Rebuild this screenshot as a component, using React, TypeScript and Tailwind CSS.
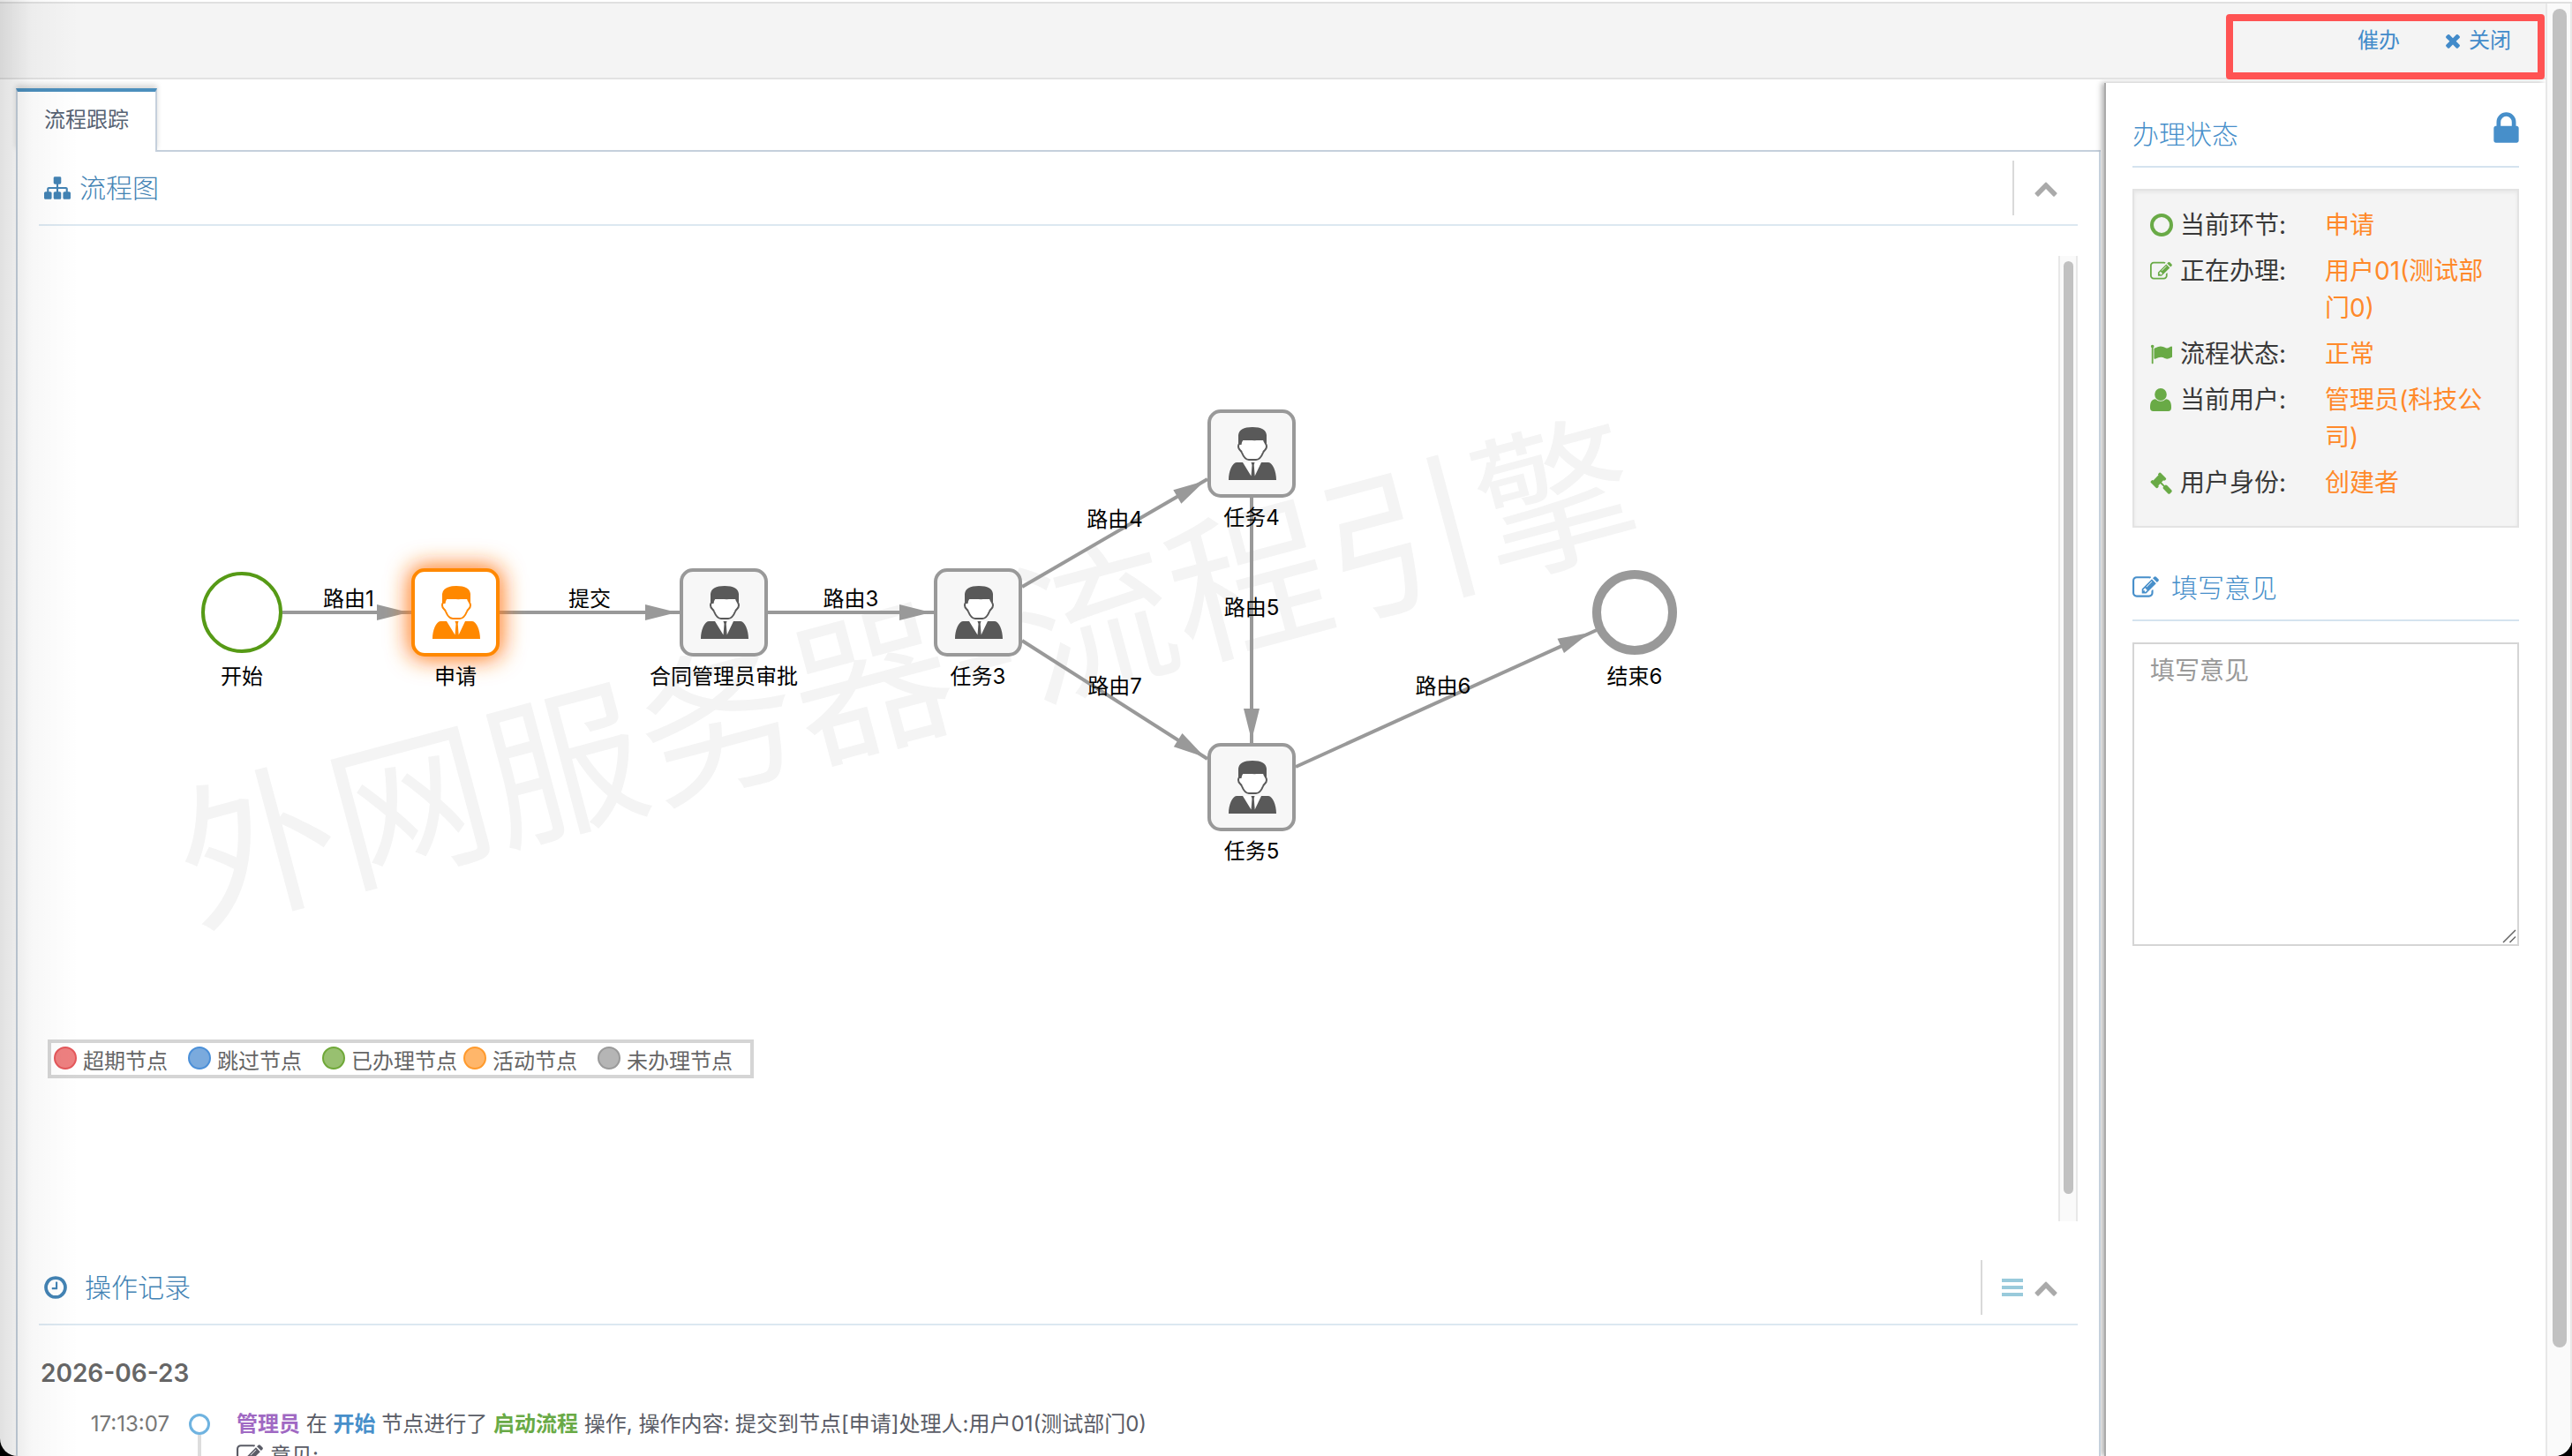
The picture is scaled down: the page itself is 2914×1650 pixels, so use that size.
import React from 'react';

const iconPaths = {
  sitemap:
    'M1792 1248v320q0 40-28 68t-68 28h-320q-40 0-68-28t-28-68v-320q0-40 28-68t68-28h96v-192h-512v192h96q40 0 68 28t28 68v320q0 40-28 68t-68 28h-320q-40 0-68-28t-28-68v-320q0-40 28-68t68-28h96v-192h-512v192h96q40 0 68 28t28 68v320q0 40-28 68t-68 28h-320q-40 0-68-28t-28-68v-320q0-40 28-68t68-28h96v-192q0-52 38-90t90-38h512v-192h-96q-40 0-68-28t-28-68v-320q0-40 28-68t68-28h320q40 0 68 28t28 68v320q0 40-28 68t-68 28h-96v192h512q52 0 90 38t38 90v192h96q40 0 68 28t28 68z',
  edit: 'M888 1184l116-116-152-152-116 116v56h96v96h56zm440-720q-16-16-33 1l-350 350q-17 17-1 33t33-1l350-350q17-17 1-33zm80 594v190q0 119-84.5 203.5t-203.5 84.5h-832q-119 0-203.5-84.5t-84.5-203.5v-832q0-119 84.5-203.5t203.5-84.5h832q63 0 117 25 15 7 18 23 3 17-9 29l-49 49q-14 14-32 8-23-6-45-6h-832q-66 0-113 47t-47 113v832q0 66 47 113t113 47h832q66 0 113-47t47-113v-126q0-13 9-22l64-64q15-15 35-7t20 29zm-96-738l288 288-672 672h-288v-288zm444 132l-92 92-288-288 92-92q28-28 68-28t68 28l152 152q28 28 28 68t-28 68z',
  lock: 'M640 768h512v-192q0-106-75-181t-181-75-181 75-75 181v192zm832 96v576q0 40-28 68t-68 28h-960q-40 0-68-28t-28-68v-576q0-40 28-68t68-28h32v-192q0-184 132-316t316-132 316 132 132 316v192h32q40 0 68 28t28 68z',
  times:
    'M1490 1322q0 40-28 68l-136 136q-28 28-68 28t-68-28l-294-294-294 294q-28 28-68 28t-68-28l-136-136q-28-28-28-68t28-68l294-294-294-294q-28-28-28-68t28-68l136-136q28-28 68-28t68 28l294 294 294-294q28-28 68-28t68 28l136 136q28 28 28 68t-28 68l-294 294 294 294q28 28 28 68z',
  chevronUp:
    'M1683 1331l-166 165q-19 19-45 19t-45-19l-531-531-531 531q-19 19-45 19t-45-19l-166-165q-19-19-19-45.5t19-45.5l742-741q19-19 45-19t45 19l742 741q19 19 19 45.5t-19 45.5z',
  clock:
    'M1024 544v448q0 14-9 23t-23 9h-320q-14 0-23-9t-9-23v-64q0-14 9-23t23-9h224v-352q0-14 9-23t23-9h64q14 0 23 9t9 23zm416 352q0-148-73-273t-198-198-273-73-273 73-198 198-73 273 73 273 198 198 273 73 273-73 198-198 73-273zm224 0q0 209-103 385.5t-279.5 279.5-385.5 103-385.5-103-279.5-279.5-103-385.5 103-385.5 279.5-279.5 385.5-103 385.5 103 279.5 279.5 103 385.5z',
  flag: 'M320 256q0 72-64 110v1266q0 13-9.5 22.5t-22.5 9.5h-64q-13 0-22.5-9.5t-9.5-22.5v-1266q-64-38-64-110 0-53 37.5-90.5t90.5-37.5 90.5 37.5 37.5 90.5zm1472 64v763q0 25-12.5 38.5t-39.5 27.5q-215 116-369 116-61 0-123.5-22t-108.5-48-115.5-48-142.5-22q-192 0-464 146-17 9-33 9-26 0-45-19t-19-45v-742q0-32 31-55 21-14 79-43 236-120 421-120 107 0 200 29t219 88q38 19 88 19 54 0 117.5-21t110-47 88-47 54.5-21q26 0 45 19t19 45z',
  gavel:
    'M1771 1536q0 53-37 90l-107 108q-39 37-91 37-53 0-90-37l-363-364q-38-36-38-90 0-53 43-96l-256-256-126 126q-14 14-34 14t-34-14q2 2 12.5 12t12.5 13 10 11.5 10 13.5 6 13.5 5.5 16.5 1.5 18q0 38-28 68-3 3-16.5 18t-19 20.5-18.5 16.5-22 15.5-22 9-26 4.5q-40 0-68-28l-408-408q-28-28-28-68 0-13 4.5-26t9-22 15.5-22 16.5-18.5 20.5-19 18-16.5q30-28 68-28 10 0 18 1.5t16.5 5.5 13.5 6 13.5 10 11.5 10 13 12.5 12 12.5q-14-14-14-34t14-34l348-348q14-14 34-14t34 14q-2-2-12.5-12t-12.5-13-10-11.5-10-13.5-6-13.5-5.5-16.5-1.5-18q0-38 28-68 3-3 16.5-18t19-20.5 18.5-16.5 22-15.5 22-9 26-4.5q40 0 68 28l408 408q28 28 28 68 0 13-4.5 26t-9 22-15.5 22-16.5 18.5-20.5 19-18 16.5q-30 28-68 28-10 0-18-1.5t-16.5-5.5-13.5-6-13.5-10-11.5-10-13-12.5-12-12.5q14 14 14 34t-14 34l-126 126 256 256q43-43 96-43 52 0 91 37l363 363q37 39 37 91z'
};

type IconName = keyof typeof iconPaths;

const Icon = ({ name, className, viewBox = '0 0 1792 1792' }: { name: IconName; className: string; viewBox?: string }) => (
  <svg viewBox={viewBox} className={`shrink-0 fill-current ${className}`} aria-hidden="true">
    <path d={iconPaths[name]} />
  </svg>
);

const CircleIcon = () => (
  <svg viewBox="0 0 26 26" className="h-[26px] w-[26px]" aria-hidden="true">
    <circle cx="13" cy="13" r="11" fill="none" stroke="currentColor" strokeWidth="4" />
  </svg>
);

const UserIcon = () => (
  <svg viewBox="0 0 24 26" className="h-[26px] w-6 fill-current" aria-hidden="true">
    <ellipse cx="12" cy="7" rx="6.8" ry="7" />
    <path d="M0 21C0 16 2 12.4 6 12.2Q12 17.4 18 12.2C22 12.4 24 16 24 21V22Q24 26 20.500 26H3.500Q0 26 0 22Z" />
  </svg>
);

// 流程节点,坐标为中心点
const taskNodes = [
  { x: 776, y: 404, label: '合同管理员审批' },
  { x: 1064, y: 404, label: '任务3' },
  { x: 1374, y: 224, label: '任务4' },
  { x: 1374, y: 602, label: '任务5' }
];

// tip 为箭头尖端, angle 为箭头方向
const routes = [
  { from: [276, 404], to: [422, 404], tip: [419, 404], angle: 0, label: '路由1', lx: 351, ly: 388 },
  { from: [522, 404], to: [726, 404], tip: [723, 404], angle: 0, label: '提交', lx: 624, ly: 388 },
  { from: [826, 404], to: [1014, 404], tip: [1011, 404], angle: 0, label: '路由3', lx: 920, ly: 388 },
  { from: [1114, 375], to: [1324, 253], tip: [1321, 255], angle: -30, label: '路由4', lx: 1219, ly: 298 },
  { from: [1114, 436], to: [1324, 570], tip: [1321, 568], angle: 32.5, label: '路由7', lx: 1219, ly: 487 },
  { from: [1374, 274], to: [1374, 552], tip: [1374, 549], angle: 90, label: '路由5', lx: 1374, ly: 398 },
  { from: [1424, 579], to: [1765, 424], tip: [1757, 427], angle: -24.500, label: '路由6', lx: 1591, ly: 487 }
];

const legends = [
  { label: '超期节点', color: 'bg-[#ee8080] border-[#e4575a]' },
  { label: '跳过节点', color: 'bg-[#7aaadd] border-[#4a8fd8]' },
  { label: '已办理节点', color: 'bg-[#98c070] border-[#6fa838]' },
  { label: '活动节点', color: 'bg-[#ffb66a] border-[#ff9a2c]' },
  { label: '未办理节点', color: 'bg-[#b5b5b5] border-[#9a9a9a]' }
];

const statusRows = [
  { icon: <CircleIcon />, label: '当前环节:', value: '申请' },
  { icon: <Icon name="edit" className="h-[25px] w-[25px]" />, label: '正在办理:', value: '用户01(测试部门0)' },
  { icon: <Icon name="flag" className="h-[25px] w-[25px]" />, label: '流程状态:', value: '正常' },
  { icon: <UserIcon />, label: '当前用户:', value: '管理员(科技公司)' },
  { icon: <Icon name="gavel" className="h-[25px] w-[25px]" />, label: '用户身份:', value: '创建者' }
];

const TaskNode = ({ x, y, label, active = false }: { x: number; y: number; label: string; active?: boolean }) => {
  const color = active ? '#ff8800' : '#595959';
  return (
    <g>
      <g transform={`translate(${x} ${y})`}>
        {active && <rect x="-53" y="-53" width="106" height="106" rx="18" fill="#ff7a1a" filter="url(#glow)" />}
        <rect
          x="-48"
          y="-48"
          width="96"
          height="96"
          rx="13"
          fill={active ? '#fff' : '#f7f7f7'}
          stroke={active ? '#ff8800' : '#999'}
          strokeWidth="4"
        />
        <g transform="translate(-26 -30)">
          <path
            d="M14 14C14 18 11 18 11 22C11 26 14 26 15 29C17 34 19 37 23 37H31C35 37 37 34 39 29C40 26 43 26 43 22C43 18 40 18 40 14Z"
            fill="#fff"
            stroke={color}
            strokeWidth="2"
          />
          <path d="M11 20V9Q12 0 27 0Q42 0 43 9V20L39.500 14Q28 16.500 18 13.500Q15 15 14.500 20Z" fill={color} />
          <path d="M16 40L26 58L38 40Z" fill="#fff" />
          <path d="M0 60C0 50 4 40.500 9 40H16L25.500 55.500L26.500 43L25.500 40H29.500L28.700 43L29.700 55.500L37 40H45C50 40.500 54 50 54 60Z" fill={color} />
        </g>
      </g>
      <text x={x} y={y + 81} textAnchor="middle">
        {label}
      </text>
    </g>
  );
};

const FlowChart = () => (
  <svg className="block h-full w-full text-[24px]" role="img" aria-label="流程图">
    <defs>
      <filter id="glow" x="-50%" y="-50%" width="200%" height="200%">
        <feGaussianBlur stdDeviation="13" />
      </filter>
    </defs>
    <text transform="translate(1000 537) rotate(-15)" textAnchor="middle" className="fill-[#f4f4f4] text-[180px]">
      外网服务器-流程引擎
    </text>
    {routes.map((route) => (
      <g key={route.label}>
        <line x1={route.from[0]} y1={route.from[1]} x2={route.to[0]} y2={route.to[1]} stroke="#999" strokeWidth="4" />
        <path d="M0 0L-36 -9V9Z" fill="#999" transform={`translate(${route.tip[0]} ${route.tip[1]}) rotate(${route.angle})`} />
      </g>
    ))}
    <circle cx="230" cy="404" r="44" fill="#fff" stroke="#569a16" strokeWidth="4" />
    <text x="230" y="485" textAnchor="middle">开始</text>
    <TaskNode x={472} y={404} label="申请" active />
    {taskNodes.map((node) => (
      <TaskNode key={node.label} {...node} />
    ))}
    <circle cx="1808" cy="404" r="43" fill="#fff" stroke="#999" strokeWidth="10" />
    <text x="1808" y="485" textAnchor="middle">结束6</text>
    {routes.map((route) => (
      <text key={route.label} x={route.lx} y={route.ly + 9} textAnchor="middle">
        {route.label}
      </text>
    ))}
  </svg>
);

const App = () => {
  return (
    <div className="h-screen overflow-hidden bg-black font-['Inter','Noto_Sans_CJK_SC',sans-serif]">
      <div className="relative flex h-full flex-col overflow-hidden rounded-b-[20px] bg-white pt-[2px]">
        <div className="flex min-h-0 flex-1 border-t-2 border-[#e0e0e0]">
          <div className="flex min-w-0 flex-1 flex-col">
            <header className="relative h-[86px] shrink-0 border-b-2 border-[#e2e2e2] bg-[#f4f4f4]">
              <nav className="absolute top-3 right-px flex h-[74px] w-[361px] items-start justify-end gap-12 rounded border-8 border-[#ff5353] pt-[10px] pr-[30px] text-[24px] leading-6 text-[#428bca]">
                <a href="#urge">催办</a>
                <a href="#close" className="flex items-center gap-[6px]">
                  <Icon name="times" className="h-6 w-6" />
                  关闭
                </a>
              </nav>
            </header>

            <div className="flex min-h-0 flex-1 gap-1">
              <main className="flex min-w-0 flex-1 flex-col pt-[10px] pl-[18px]">
                <div className="flex h-[72px] shrink-0 border-b-2 border-[#c5d0dc]" role="tablist">
                  <button
                    role="tab"
                    aria-selected="true"
                    className="relative -mb-[2px] border-x-2 border-t-4 border-x-[#c5d0dc] border-t-[#4c8fbd] bg-white px-[30px] pb-1 text-[24px] leading-6 text-[#576373] shadow-[0_-4px_6px_rgba(0,0,0,0.15)]"
                  >
                    流程跟踪
                  </button>
                </div>

                <div className="relative flex-1 border-x-2 border-[#c5d0dc] bg-white px-6">
                  <div className="flex h-[84px] items-center justify-between border-b-2 border-[#dce8f1]">
                    <h4 className="flex items-center gap-[10px] pl-[6px] text-[30px] leading-[30px] font-light text-[#4383b4]">
                      <Icon name="sitemap" className="h-[30px] w-[30px]" />
                      流程图
                    </h4>
                    <div className="flex h-[62px] items-center border-l-2 border-[#d9d9d9] pr-[22px] pl-[22px] text-[#aaa]">
                      <button aria-label="收起流程图">
                        <Icon name="chevronUp" className="h-7 w-7" />
                      </button>
                    </div>
                  </div>

                  <div className="mt-[34px] flex h-[1094px]">
                    <div className="relative min-w-0 flex-1">
                      <FlowChart />
                      <ul className="absolute top-[888px] left-[10px] grid h-11 w-[800px] grid-cols-[152px_152px_160px_152px_auto] items-center border-4 border-[#d5d5d5] pt-[2px] pl-[3px] text-[24px] leading-6 text-[#666]">
                        {legends.map((legend) => (
                          <li key={legend.label} className="flex items-center gap-[7px] whitespace-nowrap">
                            <span className={`mb-1 h-[26px] w-[26px] rounded-full border-2 ${legend.color}`} />
                            <span className="mt-1">{legend.label}</span>
                          </li>
                        ))}
                      </ul>
                    </div>
                    <div className="w-[22px] border-x-2 border-[#e8e8e8] bg-[#fafafa] px-1 pt-[6px]">
                      <div className="h-[1057px] w-[11px] rounded-full bg-[#c1c1c1]" />
                    </div>
                  </div>

                  <div className="mt-[34px] flex h-[84px] items-center justify-between border-b-2 border-[#dce8f1]">
                    <h4 className="flex items-center gap-[18px] pl-1 text-[30px] leading-[30px] font-light text-[#4383b4]">
                      <Icon name="clock" className="h-[30px] w-[30px]" />
                      操作记录
                    </h4>
                    <div className="flex h-[62px] items-center gap-3 border-l-2 border-[#d9d9d9] pr-[22px] pl-[22px] text-[#aaa]">
                      <button aria-label="列表" className="flex w-6 flex-col gap-1">
                        <span className="h-1 bg-[#99cadb]" />
                        <span className="h-1 bg-[#99cadb]" />
                        <span className="h-1 bg-[#99cadb]" />
                      </button>
                      <button aria-label="收起操作记录">
                        <Icon name="chevronUp" className="h-7 w-7" />
                      </button>
                    </div>
                  </div>

                  <h5 className="mt-10 pl-[2px] text-[28px] leading-7 font-semibold text-[#666]">2026-06-23</h5>
                  <div className="mt-6 flex text-[24px] leading-10 text-[#5a5c66]">
                    <time className="w-[148px] text-right text-[#777]">17:13:07</time>
                    <div className="ml-[22px] flex flex-col items-center pt-2">
                      <span className="h-6 w-6 shrink-0 rounded-full border-[3px] border-[#6fb3e0] bg-white" />
                      <span className="w-1 flex-1 bg-[#ddd]" />
                    </div>
                    <div className="ml-[30px]">
                      <p>
                        <b className="text-[#a069c3]">管理员</b> 在 <b className="text-[#478fca]">开始</b> 节点进行了{' '}
                        <b className="text-[#69aa46]">启动流程</b> 操作, 操作内容: 提交到节点[申请]处理人:用户01(测试部门0)
                      </p>
                      <p className="flex items-center gap-2 leading-8">
                        <Icon name="edit" className="h-[30px] w-[30px]" />
                        意见:
                      </p>
                    </div>
                  </div>
                </div>
              </main>

              <aside className="mt-1 w-[500px] shrink-0 border-l-2 border-[#aaa] bg-white pr-[30px] pl-[30px] shadow-[-3px_0_6px_rgba(0,0,0,0.3)]">
                <div className="flex h-24 items-center justify-between border-b-2 border-[#d5e3ef] pt-[22px] text-[#478fca]">
                  <h4 className="text-[30px] leading-[30px] font-light">办理状态</h4>
                  <Icon name="lock" className="mb-3 h-11 w-[29px]" viewBox="320 0 1152 1792" />
                </div>

                <dl className="mt-6 flex flex-col gap-[10px] border-2 border-[#e3e3e3] bg-[#f4f4f4] px-[18px] pt-[18px] pb-7 text-[28px] leading-[42px] shadow-[inset_0_2px_4px_rgba(0,0,0,0.06)]">
                  {statusRows.map((row) => (
                    <div key={row.label} className="flex">
                      <dt className="flex w-[198px] shrink-0 gap-2 text-[#393939]">
                        <span className="flex h-[42px] w-[26px] items-center text-[#69aa46]">{row.icon}</span>
                        {row.label}
                      </dt>
                      <dd className="text-[#ff892a] break-all">{row.value}</dd>
                    </div>
                  ))}
                </dl>

                <div className="flex h-[106px] items-center gap-[14px] border-b-2 border-[#d5e3ef] pt-8 text-[#478fca]">
                  <Icon name="edit" className="h-[30px] w-[30px]" />
                  <h4 className="text-[30px] leading-[30px] font-light">填写意见</h4>
                </div>

                <div className="relative mt-6">
                  <textarea
                    aria-label="填写意见"
                    placeholder="填写意见"
                    className="block h-[344px] w-full resize-none border-2 border-[#d5d5d5] px-[18px] pt-[10px] text-[28px] leading-10 placeholder:text-[#999]"
                  />
                  <svg viewBox="0 0 16 16" className="absolute right-[3px] bottom-[3px] h-4 w-4" aria-hidden="true">
                    <path d="M1 15L15 1M8.500 15L15 8.500" stroke="#666" strokeWidth="1.500" />
                  </svg>
                </div>
              </aside>
            </div>
          </div>

          <div className="w-[30px] shrink-0 border-x-2 border-[#e8e8e8] bg-[#fafafa] px-[6px] pt-[6px]">
            <div className="h-[1517px] w-4 rounded-full bg-[#c1c1c1]" />
          </div>
        </div>

        {/* 左侧遮罩阴影 */}
        <div className="pointer-events-none absolute inset-y-0 left-0 w-[90px] bg-linear-to-r from-black/12 via-black/3 via-40% to-transparent" />
      </div>
    </div>
  );
};

export default App;
